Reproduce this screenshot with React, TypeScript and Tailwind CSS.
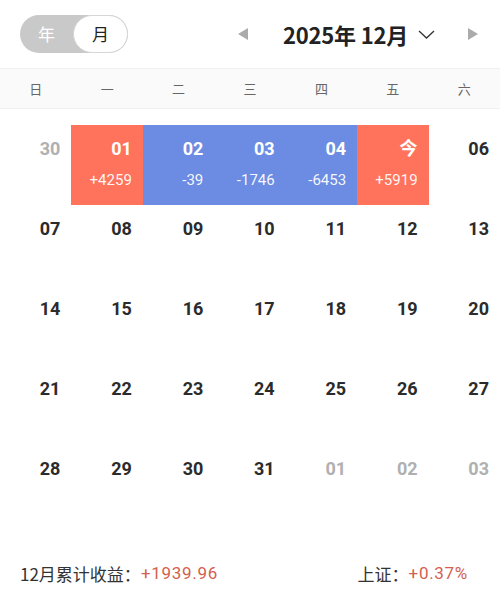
import React from 'react';

type Day = {
  label: string;
  muted?: boolean;
  tone?: 'red' | 'blue';
  value?: string;
};

const weekdays = ['日', '一', '二', '三', '四', '五', '六'];

const days: Day[] = [
  { label: '30', muted: true },
  { label: '01', tone: 'red', value: '+4259' },
  { label: '02', tone: 'blue', value: '-39' },
  { label: '03', tone: 'blue', value: '-1746' },
  { label: '04', tone: 'blue', value: '-6453' },
  { label: '今', tone: 'red', value: '+5919' },
  { label: '06' },
  ...['07', '08', '09', '10', '11', '12', '13'].map((label) => ({ label })),
  ...['14', '15', '16', '17', '18', '19', '20'].map((label) => ({ label })),
  ...['21', '22', '23', '24', '25', '26', '27'].map((label) => ({ label })),
  { label: '28' },
  { label: '29' },
  { label: '30' },
  { label: '31' },
  { label: '01', muted: true },
  { label: '02', muted: true },
  { label: '03', muted: true },
];

export default function App() {
  return (
    <div className="w-[500px] h-[603px] bg-white font-['Roboto','Noto_Sans_CJK_SC',sans-serif] text-[#333] overflow-hidden">
      {/* Header */}
      <div className="flex items-center h-[68px] pl-5 pr-[22px]">
        <div className="flex items-center h-[38px] w-[108px] rounded-full bg-[#c9c9c9]">
          <span className="flex-1 text-center text-[17px] text-white font-['Noto_Sans_CJK_SC',sans-serif]">年</span>
          <span className="flex items-center justify-center h-[38px] w-[55px] rounded-full bg-white border border-[#d6d6d6] text-[17px] text-[#222] font-['Noto_Sans_CJK_SC',sans-serif]">
            月
          </span>
        </div>
        <div className="flex-1" />
        <svg width="10" height="12" viewBox="0 0 10 12" className="mr-[35px]">
          <path d="M10 0 L0 6 L10 12 Z" fill="#ababab" />
        </svg>
        <div className="flex items-center">
          <span className="text-[22px] font-bold text-[#222] font-['Noto_Sans_CJK_SC',sans-serif] tracking-[-0.2px]">2025年 12月</span>
          <svg width="17" height="9" viewBox="0 0 17 9" className="ml-[10px]">
            <path d="M1 1 L8.5 8 L16 1" fill="none" stroke="#333" strokeWidth="1.3" />
          </svg>
        </div>
        <svg width="10" height="12" viewBox="0 0 10 12" className="ml-[33px]">
          <path d="M0 0 L10 6 L0 12 Z" fill="#ababab" />
        </svg>
      </div>

      {/* Weekday band */}
      <div className="grid grid-cols-7 h-[41px] items-center bg-[#fafafa] border-y border-[#f0f0f0]">
        {weekdays.map((w) => (
          <span key={w} className="text-center text-[13px] text-[#666] font-['Noto_Sans_CJK_SC',sans-serif]">
            {w}
          </span>
        ))}
      </div>

      {/* Days */}
      <div className="grid grid-cols-7 pt-4">
        {days.map((d, i) => {
          const bg = d.tone === 'red' ? 'bg-[#ff735c]' : d.tone === 'blue' ? 'bg-[#6b8ce2]' : '';
          const color = d.tone ? 'text-white' : d.muted ? 'text-[#b0b0b0]' : 'text-[#2b2b2b]';
          return (
            <div key={i} className={`h-[80px] flex flex-col items-end pr-[11px] pt-[12px] ${bg}`}>
              <span className={`text-[18px] font-bold leading-[24px] ${color}`}>{d.label}</span>
              {d.value && <span className="mt-[9px] text-[15px] leading-[20px] text-white/95">{d.value}</span>}
            </div>
          );
        })}
      </div>

      {/* Footer */}
      <div className="flex items-center justify-between pl-5 pr-[32px] mt-[36px] text-[17px]">
        <div className="flex items-center">
          <span className="text-[#333] font-['Noto_Sans_CJK_SC',sans-serif]">12月累计收益：</span>
          <span className="text-[#d4604f] tracking-[0.7px]">+1939.96</span>
        </div>
        <div className="flex items-center">
          <span className="text-[#333] font-['Noto_Sans_CJK_SC',sans-serif]">上证：</span>
          <span className="text-[#d4604f] tracking-[0.7px]">+0.37%</span>
        </div>
      </div>
    </div>
  );
}
